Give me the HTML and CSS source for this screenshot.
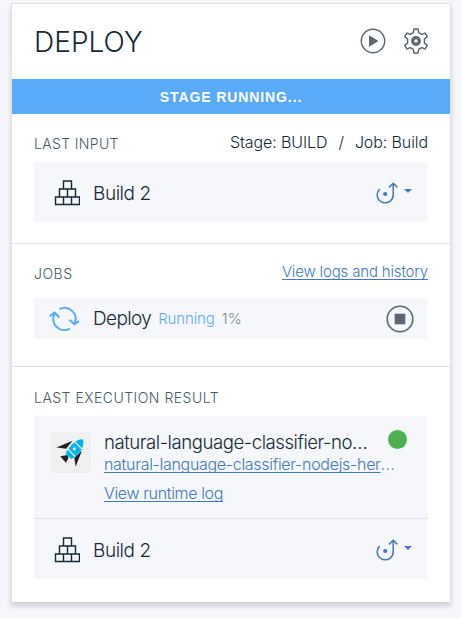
FILE: index.html
```html
<!DOCTYPE html>
<html lang="en">
<head>
<meta charset="utf-8">
<title>Deploy stage</title>
<link rel="stylesheet" href="styles.css">
</head>
<body>
<svg class="defs" width="0" height="0">
  <symbol id="boxes" viewBox="0 0 26 26">
    <path d="M9.5 1h8v8h-8zM5.5 9h8v8h-8zM13.5 9h8v8h-8zM1.5 17h8v7.5h-8zM9.5 17h8v7.5h-8zM17.5 17h8v7.5h-8z" fill="none" stroke="#152935" stroke-width="1.4"/>
  </symbol>
  <symbol id="promote" viewBox="0 0 22 22">
    <path d="M3.6 7.1A8 8 0 1 0 17.2 12.4V1M13 5.4l4.2-4.2 4.2 4.2" fill="none" stroke="#4178be" stroke-width="1.5"/>
    <circle cx="9.2" cy="12" r="2.1" fill="#4178be"/>
  </symbol>
</svg>
<main class="card">
  <header class="head">
    <h1 class="title">DEPLOY</h1>
    <svg class="play" width="26" height="26" viewBox="0 0 26 26"><circle cx="13" cy="13" r="11.7" fill="none" stroke="#5a6872" stroke-width="1.5"/><path d="M9 7.2v11.6L18.6 13z" fill="#5a6872"/></svg>
    <svg width="26" height="26" viewBox="0 0 26 26"><path d="M11 1h4l.7 3.7 2.9 1.7 3.6-1.3 2 3.5-2.8 2.5v3.8l2.8 2.5-2 3.5-3.6-1.3-2.9 1.7L15 25h-4l-.7-3.7-2.9-1.7-3.6 1.3-2-3.5 2.8-2.5v-3.8L1.8 8.6l2-3.5 3.6 1.3 2.9-1.7z" fill="none" stroke="#5a6872" stroke-width="1.5" stroke-linejoin="round"/><circle cx="13" cy="13" r="3.3" fill="none" stroke="#5a6872" stroke-width="3.2"/></svg>
  </header>
  <div class="banner">STAGE RUNNING...</div>
  <section class="section input">
    <div class="row"><h2 class="label last-input">LAST INPUT</h2><div class="origin"><span>Stage: BUILD</span><span>/</span><span>Job: Build</span></div></div>
    <div class="panel build">
      <svg class="boxes"><use href="#boxes"/></svg><span class="name">Build 2</span><svg class="promote"><use href="#promote"/></svg><i class="caret"></i>
    </div>
  </section>
  <section class="section jobs">
    <div class="row"><h2 class="label jobs-label">JOBS</h2><a class="link history">View logs and history</a></div>
    <div class="panel job">
      <svg class="sync" width="31" height="26" viewBox="0 0 31 26"><path d="M10.5 3.2A11 11 0 0 1 25.7 17.2M20.7 22.6A11 11 0 0 1 5.5 8" fill="none" stroke="#5aaafa" stroke-width="2"/><path d="M20.4 13.8l4.9 4.4 4.8-3.1M.8 10.2l4.8-3.4 4.7 4.6" fill="none" stroke="#5aaafa" stroke-width="2.2"/></svg>
      <span class="name deploy">Deploy</span><span class="status">Running</span><span class="percent">1%</span>
      <svg class="stop" width="28" height="28" viewBox="0 0 28 28"><circle cx="14" cy="14" r="12.8" fill="none" stroke="#5a6872" stroke-width="1.6"/><path d="M8.7 8.7h10.6v10.6H8.7z" fill="#5a6872"/></svg>
    </div>
  </section>
  <section class="section result">
    <h2 class="label result-label">LAST EXECUTION RESULT</h2>
    <div class="panel">
      <div class="app">
        <div class="rocket"><svg width="41" height="41" viewBox="0 0 41 41">
          <path d="M22.5 8.8L6.5 15.6l9.7 1.2zM17.6 23l-7.4 1.2 5.6 6.6 2.6-4.6zM32 18.5l-6.4 16.2-1.3-8.9z" fill="#222328"/>
          <path d="M33 7.5c1.4 4.8-.8 10.6-4.8 14.6-2 2-4.5 3.8-7 4.8l-5.6-4.8c.9-2.6 2.6-5.3 4.8-7.8 3.8-4.3 8.8-7.9 12.6-6.8z" fill="#00b4f1"/>
          <path d="M24.8 9.8l7.2 7.4M18 17.2l7 7.3" stroke="#f0f0f0" stroke-width="1.2" fill="none"/>
          <circle cx="24.3" cy="16.8" r="1.6" fill="#f0f0f0"/>
        </svg></div>
        <div class="details">
          <div class="name app-name">natural-language-classifier-no…</div>
          <div class="line"><a class="link route">natural-language-classifier-nodejs-her</a><span class="dots">…</span></div>
          <div class="line"><a class="link log">View runtime log</a></div>
        </div>
        <i class="health"></i>
      </div>
      <div class="build build-result">
        <svg class="boxes"><use href="#boxes"/></svg><span class="name">Build 2</span><svg class="promote"><use href="#promote"/></svg><i class="caret"></i>
      </div>
    </div>
  </section>
</main>
</body>
</html>
```

FILE: styles.css
```css
* { box-sizing: border-box; }
body { margin: 0; height: 618px; padding: 3px 10px 16px 11px; background: #f5f7fb; font-family: Inter, "Liberation Sans", sans-serif; font-weight: 300; color: #152935; overflow: hidden; }
.defs { position: absolute; }
svg { display: block; flex: none; }
h1, h2 { margin: 0; font-weight: 300; }
.card { height: 599px; background: #fff; border: 1px solid #dfe3e6; border-bottom: 0; box-shadow: 0 4px 5px rgba(0, 0, 0, .16); }
.head { height: 75px; padding: 0 22px; display: flex; align-items: center; }
.title { flex: 1; font-size: 28px; line-height: 36px; letter-spacing: .05px; white-space: nowrap; padding-top: 1px; }
.play { margin-right: 17px; }
.head svg { margin-bottom: 2px; }
.head svg:last-child { margin-right: -1px; }
.banner { height: 35px; background: #5aaafa; color: #fff; text-align: center; font: 700 14px/36px "Liberation Sans", sans-serif; letter-spacing: .9px; }
.section { padding: 0 22px; border-bottom: 1px solid #dfe3e6; white-space: nowrap; }
.input { height: 130px; padding-top: 18px; }
.jobs { height: 123px; padding-top: 18px; }
.result { height: 234px; padding-top: 20px; border: 0; }
.row { height: 30px; display: flex; justify-content: space-between; }
.label { font-size: 14px; line-height: 22px; letter-spacing: .35px; color: #4a5963; }
.row .label { padding-top: 1px; }
.result-label.label { height: 29px; letter-spacing: .48px; }
.jobs-label.label { letter-spacing: .5px; }
.origin { display: flex; gap: 11px; font-size: 16px; line-height: 20px; letter-spacing: -.1px; }
.panel { background: #f5f7fb; }
.build { height: 60px; display: flex; align-items: center; padding: 2px 16px 0 20px; }
.boxes { width: 26px; height: 26px; margin-right: 13px; }
.build .name { padding-top: 2px; }
.name { font-size: 19px; line-height: 24px; letter-spacing: -.45px; }
.promote { width: 22px; height: 22px; margin-left: auto; }
.caret { border: 4px solid transparent; border-top-color: #4178be; border-bottom: 0; margin: 0 0 5px 6px; }
.link { color: #4178be; text-decoration: underline; text-underline-offset: 2px; text-decoration-skip-ink: none; }
.history { font-size: 15px; line-height: 20px; letter-spacing: -.16px; }
.job { height: 41px; margin-top: 6px; padding: 0 14px 0 15px; display: flex; align-items: center; }
.sync { margin-right: 13px; }
.job .deploy { letter-spacing: -.65px; }
.status { color: #5aaafa; font-size: 15px; letter-spacing: -.12px; margin-left: 7px; }
.percent { color: #7c898d; font-size: 15px; letter-spacing: .3px; margin-left: 7px; }
.stop { margin-left: auto; }
.app { height: 103px; border-bottom: 1px solid #dfe3e6; display: flex; padding: 16px 21px 0 16px; align-items: flex-start; }
.rocket { width: 41px; height: 41px; border-radius: 2px; background: #f0f0f0; margin-right: 13px; flex: none; }
.details { flex: 1; min-width: 0; margin-top: -3px; }
.app-name { height: 24px; padding-top: 1px; font-size: 18.6px; letter-spacing: -.46px; }
.line { height: 29px; font-size: 16px; line-height: 22px; letter-spacing: -.3px; }
.log { letter-spacing: -.36px; }
.dots { color: #4178be; letter-spacing: 0; font-size: 17px; line-height: 1; }
.health { width: 19px; height: 19px; border-radius: 50%; background: #4caf50; margin-top: -2px; flex: none; }
```
